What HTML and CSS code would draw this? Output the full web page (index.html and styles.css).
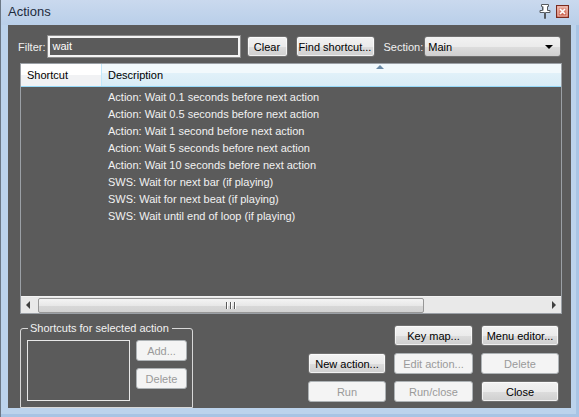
FILE: index.html
```html
<!DOCTYPE html>
<html>
<head>
<meta charset="utf-8">
<link rel="stylesheet" href="styles.css">
</head>
<body>
<div class="window">
  <div class="titlebar">
    <span class="title">Actions</span>
    <span class="tb-icons">
      <svg class="pin" width="12" height="15" viewBox="0 0 12 15">
        <path d="M2.5 0.5h7v2h-1v4h2.5v2h-4.5v6h-1v-6h-4.5v-2h2.5v-4h-1z" fill="#ffffff" stroke="#555a60" stroke-width="1" stroke-linejoin="miter"/>
        <path d="M4.5 2.5v4" stroke="#b0b4b8" stroke-width="1"/>
      </svg>
      <svg class="close" width="13" height="13" viewBox="0 0 13 13">
        <defs><linearGradient id="cg" x1="0" y1="0" x2="0" y2="1"><stop offset="0" stop-color="#e9a99d"/><stop offset="1" stop-color="#c8553f"/></linearGradient></defs>
        <rect x="0.5" y="0.5" width="12" height="12" fill="url(#cg)" stroke="#7a2b1f"/>
        <rect x="2" y="2" width="9" height="9" fill="none" stroke="#f3cfc8" stroke-width="0.8"/>
        <path d="M4 4l5 5M9 4l-5 5" stroke="#fff" stroke-width="1.6"/>
      </svg>
    </span>
  </div>
  <div class="content">
    <div class="filter-row">
      <span class="lbl">Filter:</span>
      <div class="input">wait</div>
      <button class="btn w-clear">Clear</button>
      <button class="btn w-find">Find shortcut...</button>
      <span class="lbl sec">Section:</span>
      <div class="select"><span>Main</span><span class="arrow"></span></div>
    </div>
    <div class="list">
      <div class="header">
        <div class="hcell h-short">Shortcut</div>
        <div class="hcell h-desc">Description<span class="sort"></span></div>
      </div>
      <div class="rows">
        <div class="row">Action: Wait 0.1 seconds before next action</div>
        <div class="row">Action: Wait 0.5 seconds before next action</div>
        <div class="row">Action: Wait 1 second before next action</div>
        <div class="row">Action: Wait 5 seconds before next action</div>
        <div class="row">Action: Wait 10 seconds before next action</div>
        <div class="row">SWS: Wait for next bar (if playing)</div>
        <div class="row">SWS: Wait for next beat (if playing)</div>
        <div class="row">SWS: Wait until end of loop (if playing)</div>
      </div>
      <div class="hscroll">
        <div class="sarrow left"></div>
        <div class="track">
          <div class="thumb"><span class="grip"></span><span class="grip"></span><span class="grip"></span></div>
        </div>
        <div class="sarrow right"></div>
      </div>
    </div>
    <div class="bottom">
      <fieldset class="group">
        <legend>Shortcuts for selected action</legend>
        <div class="group-body">
          <div class="sclist"></div>
          <div class="gbtns">
            <button class="btn dis gb">Add...</button>
            <button class="btn dis gb">Delete</button>
          </div>
        </div>
      </fieldset>
      <div class="grid">
        <span></span>
        <button class="btn">Key map...</button>
        <button class="btn">Menu editor...</button>
        <button class="btn">New action...</button>
        <button class="btn dis">Edit action...</button>
        <button class="btn dis">Delete</button>
        <button class="btn dis">Run</button>
        <button class="btn dis">Run/close</button>
        <button class="btn">Close</button>
      </div>
    </div>
  </div>
</div>
</body>
</html>
```

FILE: styles.css
```css
* { box-sizing: border-box; }
html, body { margin: 0; padding: 0; }
body {
  width: 579px; height: 417px; overflow: hidden;
  font-family: "Liberation Sans", Arial, sans-serif;
  font-size: 11px;
  background: #bcd3ec;
}
.window {
  width: 579px; height: 417px;
  background: #bcd3ec;
  border-left: 1px solid #6c7886;
  padding: 0 8px 9px 7px;
  display: flex; flex-direction: column;
  box-shadow: inset -3px 0 0 #a8c4e4, inset 0 -3px 0 #a8c4e4;
}
.titlebar {
  height: 25px; flex: none;
  display: flex; align-items: center;
  background: linear-gradient(#cad9ee, #b9cfe9);
  margin: 0 -8px 0 -7px;
  padding: 0 10px 2px 7px;
}
.title { font-size: 13px; color: #1e2b3c; }
.tb-icons { margin-left: auto; display: flex; align-items: center; gap: 5px; }
.pin { margin-top: -1px; }
.content {
  flex: 1;
  background: #5b5b5b;
  display: flex; flex-direction: column;
  color: #fff;
}
.filter-row {
  margin-top: 11px; height: 21px;
  display: flex; align-items: center;
  padding-left: 10px;
}
.lbl { color: #f0f0f0; font-size: 11px; white-space: nowrap; }
.input {
  margin-left: 2px;
  width: 192px; height: 21px;
  border: 2px solid #f4f4f4;
  outline: 1px solid #8d8d8d;
  padding: 1px 3px;
  color: #fff; font-size: 11px;
  line-height: 14px;
}
.btn {
  font-family: "Liberation Sans", Arial, sans-serif;
  font-size: 11px;
  white-space: nowrap;
  color: #000;
  height: 21px;
  padding: 0;
  border: 1px solid #707070;
  border-radius: 3px;
  background: linear-gradient(#f2f2f2 0%, #ebebeb 50%, #dddddd 51%, #cfcfcf 100%);
  box-shadow: inset 0 0 0 1px rgba(255,255,255,0.7);
}
.btn.dis {
  color: #9a9a9a;
  border-color: #adb2b5;
  background: #f4f4f4;
  box-shadow: none;
}
.w-clear { width: 41px; margin-left: 7px; }
.w-find { width: 79px; margin-left: 8px; }
.sec { margin-left: 9px; }
.select {
  margin-left: 1px;
  width: 137px; height: 21px;
  border: 1px solid #707070;
  border-radius: 3px;
  background: linear-gradient(#f2f2f2 0%, #ebebeb 50%, #dddddd 51%, #cfcfcf 100%);
  color: #000;
  display: flex; align-items: center;
  padding: 0 7px 0 3px;
}
.select .arrow {
  margin-left: auto;
  width: 0; height: 0;
  border-left: 4px solid transparent;
  border-right: 4px solid transparent;
  border-top: 4px solid #000;
}
.list {
  margin: 6px 0 0 12px;
  width: 542px; height: 251px;
  border: 1px solid #9ba0a6;
  display: flex; flex-direction: column;
}
.header {
  height: 23px; flex: none;
  display: flex;
  color: #000;
  border-bottom: 1px solid #96d9f9;
}
.hcell {
  height: 22px; line-height: 22px;
  padding-left: 6px;
  font-size: 11px;
}
.h-short {
  width: 81px;
  background: linear-gradient(#ffffff 0%, #ffffff 50%, #f1f2f4 51%, #f1f2f4 100%);
  border-right: 1px solid #c2e8fb;
}
.h-desc {
  flex: 1; position: relative;
  background: linear-gradient(#f2f9fc 0%, #f2f9fc 40%, #e1f1f9 41%, #d8ecf6 100%);
}
.sort {
  position: absolute; left: 274px; top: 1px;
  width: 0; height: 0;
  border-left: 4px solid transparent;
  border-right: 4px solid transparent;
  border-bottom: 4px solid #6a8aa6;
}
.rows { flex: 1; padding: 2px 0 0 87px; }
.row { height: 17px; line-height: 17px; color: #f2f2f2; font-size: 11px; }
.hscroll {
  height: 17px; flex: none;
  display: flex; align-items: stretch;
  background: #e9e9e9;
  border-top: 1px solid #f4f4f4;
}
.sarrow { width: 17px; position: relative; }
.sarrow.left::after, .sarrow.right::after {
  content: ""; position: absolute; top: 4px;
  border-top: 4px solid transparent; border-bottom: 4px solid transparent;
}
.sarrow.left::after { left: 5px; border-right: 4px solid #404040; }
.sarrow.right::after { left: 8px; border-left: 4px solid #404040; }
.track { flex: 1; padding: 1px 0; display: flex; }
.thumb {
  width: 386px; height: 15px;
  border: 1px solid #979797;
  border-radius: 2px;
  background: linear-gradient(#f4f4f4 0%, #e8e8e8 50%, #d8d8d8 51%, #d2d2d2 100%);
  display: flex; justify-content: center; align-items: center; gap: 2px;
}
.grip { width: 2px; height: 7px; background: #5a5a5a; border-right: 1px solid #fff; }
.bottom {
  flex: 1;
  display: flex;
}
.group {
  margin: 8px 0 0 12px;
  padding: 6px 5px 0 6px;
  width: 173px;
  border: 1px solid #d8d8d8;
  border-radius: 3px 3px 0 0;
  color: #fff;
  align-self: stretch;
  min-width: 0;
}
.group legend {
  padding: 0 3px 0 2px;
  margin-left: 1px;
  font-size: 11px;
  color: #f2f2f2;
}
.group-body { display: flex; gap: 6px; }
.sclist {
  width: 103px; height: 61px;
  border: 1px solid #e8e8e8;
}
.gbtns { display: flex; flex-direction: column; gap: 7px; }
.gb { width: 51px; }
.grid {
  margin: 11px 12px 0 auto;
  display: grid;
  grid-template-columns: 78px 79px 78px;
  grid-auto-rows: 21px;
  column-gap: 8px; row-gap: 7px;
  align-self: flex-start;
}
.grid .btn { width: 100%; }
```
